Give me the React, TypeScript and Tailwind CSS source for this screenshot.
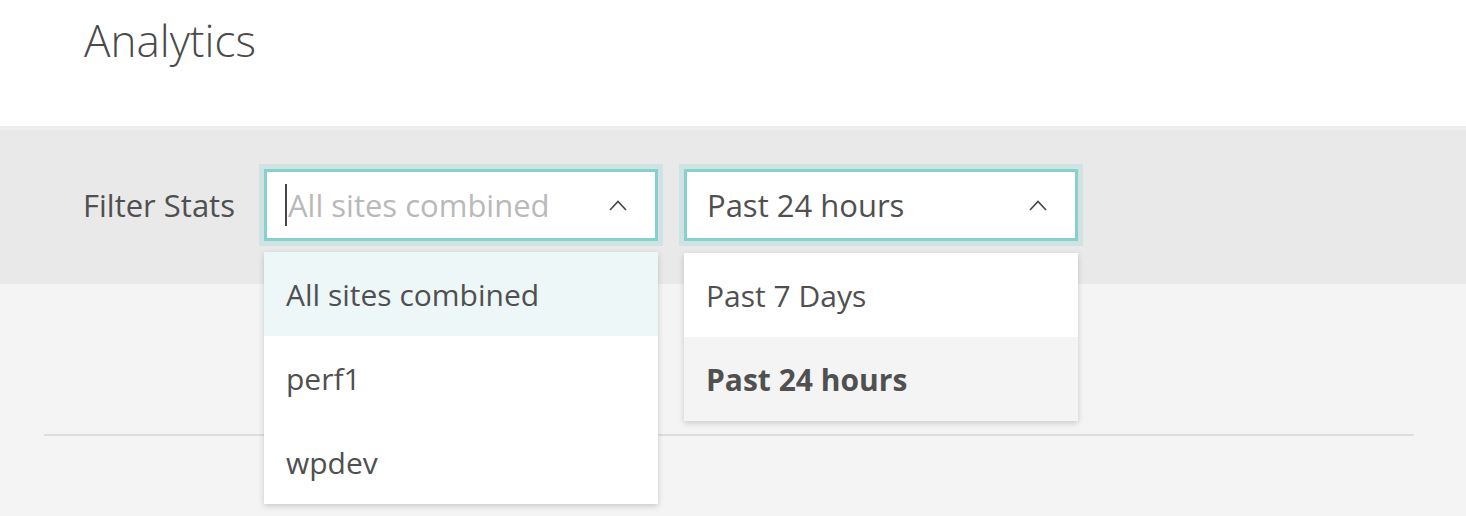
import React from 'react';

function Chevron() {
    return (
        <svg width="18" height="11" viewBox="0 0 18 11" fill="none" className="shrink-0">
            <polyline points="1,10 9,1.5 17,10" stroke="#444" strokeWidth="1.6" />
        </svg>
    );
}

const sites = ['All sites combined', 'perf1', 'wpdev'];
const ranges = ['Past 7 Days', 'Past 24 hours'];

export default function App() {
    return (
        <div className="h-[516px] w-full overflow-hidden bg-[#f4f4f4] font-['Open_Sans',sans-serif] text-[#505050]">
            <header className="h-[126px] bg-white pl-[84px] pt-[12px]">
                <h1 className="text-[44px] font-light leading-[56px] text-[#4a4a4a]">Analytics</h1>
            </header>

            <section className="flex h-[158px] items-center border-t-4 border-[#eeeeee] bg-[#e9e9e9] pb-[4px] pl-[83px]">
                <span className="w-[181px] text-[31px] leading-none text-[#505050]">Filter Stats</span>

                <div className="flex gap-[26px]">
                    {/* site select */}
                    <div className="relative">
                        <div className="flex h-[72px] w-[394px] items-center border-[3px] border-[#86d0ce] bg-white pl-[18px] pr-[28px] ring-[5px] ring-[#cfe3e3]">
                            <span className="h-[42px] w-[2px] bg-[#444]" />
                            <span className="ml-[1px] flex-1 text-[31px] text-[#b9b9b9]">All sites combined</span>
                            <Chevron />
                        </div>
                        <ul className="absolute left-0 top-[83px] z-10 w-full bg-white shadow-[0_2px_6px_rgba(0,0,0,0.18)]">
                            {sites.map((s, i) => (
                                <li
                                    key={s}
                                    className={`flex h-[84px] items-center pl-[22px] text-[30px] ${i === 0 ? 'bg-[#eef7f8]' : ''}`}
                                >
                                    {s}
                                </li>
                            ))}
                        </ul>
                    </div>

                    {/* time range select */}
                    <div className="relative">
                        <div className="flex h-[72px] w-[394px] items-center border-[3px] border-[#86d0ce] bg-white pl-[20px] pr-[28px] ring-[5px] ring-[#cfe3e3]">
                            <span className="flex-1 text-[31px] text-[#505050]">Past 24 hours</span>
                            <Chevron />
                        </div>
                        <ul className="absolute left-0 top-[84px] z-10 w-full bg-white shadow-[0_2px_6px_rgba(0,0,0,0.18)]">
                            {ranges.map((r, i) => (
                                <li
                                    key={r}
                                    className={`flex h-[84px] items-center pl-[22px] text-[30px] ${i === 1 ? 'bg-[#f4f4f4] font-bold' : ''}`}
                                >
                                    {r}
                                </li>
                            ))}
                        </ul>
                    </div>
                </div>
            </section>

            <div className="ml-[44px] mr-[52px] mt-[150px] h-[2px] bg-[#dedede]" />
        </div>
    );
}
